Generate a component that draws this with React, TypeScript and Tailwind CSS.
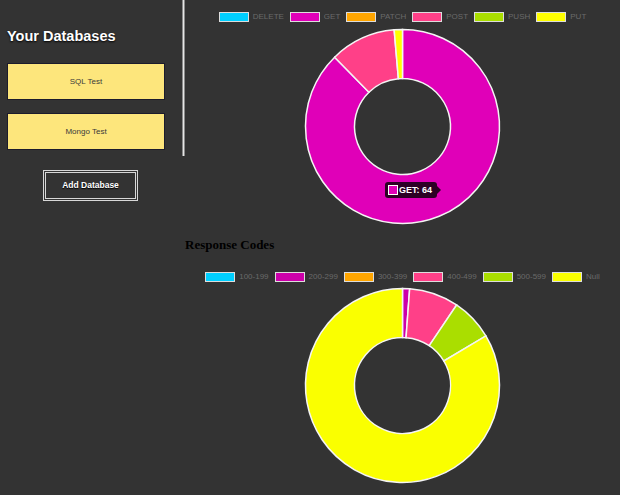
type Slice = { label: string; value: number; color: string }

const methods: Slice[] = [
  { label: "DELETE", value: 0, color: "#00cfff" },
  { label: "GET", value: 64, color: "#e000b8" },
  { label: "PATCH", value: 0, color: "#ffa500" },
  { label: "POST", value: 8, color: "#ff4088" },
  { label: "PUSH", value: 0, color: "#aade00" },
  { label: "PUT", value: 1, color: "#ffff00" },
]

const codes: Slice[] = [
  { label: "100-199", value: 0, color: "#00cfff" },
  { label: "200-299", value: 1, color: "#cc00aa" },
  { label: "300-399", value: 0, color: "#ffa500" },
  { label: "400-499", value: 7, color: "#ff4088" },
  { label: "500-599", value: 6, color: "#aade00" },
  { label: "Null", value: 71, color: "#faff00" },
]

function pt(cx: number, cy: number, r: number, a: number) {
  return [cx + r * Math.sin(a), cy - r * Math.cos(a)]
}

function arc(cx: number, cy: number, ro: number, ri: number, a0: number, a1: number) {
  const big = a1 - a0 > Math.PI ? 1 : 0
  const [x0, y0] = pt(cx, cy, ro, a0)
  const [x1, y1] = pt(cx, cy, ro, a1)
  const [x2, y2] = pt(cx, cy, ri, a1)
  const [x3, y3] = pt(cx, cy, ri, a0)
  return `M${x0} ${y0} A${ro} ${ro} 0 ${big} 1 ${x1} ${y1} L${x2} ${y2} A${ri} ${ri} 0 ${big} 0 ${x3} ${y3} Z`
}

function Donut({ data }: { data: Slice[] }) {
  const total = data.reduce((s, d) => s + d.value, 0)
  let a = 0
  return (
    <svg width="435" height="200" className="block">
      {data.map((d) => {
        if (!d.value) return null
        const a0 = a
        a += (d.value / total) * Math.PI * 2
        return (
          <path key={d.label} d={arc(217.5, 99.5, 97, 48, a0, a)} fill={d.color} stroke="#f4f4f4" strokeWidth="1.5" />
        )
      })}
    </svg>
  )
}

function Legend({ data }: { data: Slice[] }) {
  return (
    <div className="flex h-[10px] items-center justify-center gap-[6px]">
      {data.map((d) => (
        <div key={d.label} className="flex items-center gap-[4px]">
          <span className="h-[10px] w-[30px] border border-[#dddddd]" style={{ backgroundColor: d.color }} />
          <span className="text-[8px] leading-none text-[#6a6a6a]">{d.label}</span>
        </div>
      ))}
    </div>
  )
}

export default function App() {
  return (
    <div
      className="flex h-[495px] w-[620px] overflow-hidden bg-[#333333]"
      style={{ fontFamily: '"Liberation Sans", Arial, sans-serif' }}
    >
      <aside className="w-[185px] shrink-0">
        <div className="flex">
          <div className="w-[182px] pl-[7px] pr-[17px]">
            <h2 className="pt-[28px] text-[14.5px] font-bold leading-[16px] text-white [text-shadow:0_1px_2px_#000]">
              Your Databases
            </h2>
            <div className="mt-[19px] flex flex-col gap-[13px] pb-[6px]">
              {["SQL Test", "Mongo Test"].map((name) => (
                <button
                  key={name}
                  className="flex h-[37px] w-[158px] items-center justify-center border border-[#1c1c2c] bg-[#fde67c] text-[8px] text-[#3a3a3a]"
                >
                  {name}
                </button>
              ))}
            </div>
          </div>
          <div className="w-[3px] border-x border-[#8a8a8a] bg-[#e6e6e6]" />
        </div>
        <div className="mt-[14px] flex pl-[43px]">
          <button className="h-[31px] w-[95px] border-[3px] border-double border-[#d8d8d8] text-[8.5px] font-bold text-white [text-shadow:0_1px_1px_#000]">
            Add Database
          </button>
        </div>
      </aside>

      <main className="w-[435px]">
        <div className="mt-[12px]">
          <Legend data={methods} />
        </div>
        <div className="relative mt-[5px]">
          <Donut data={methods} />
          <div className="absolute left-[200px] top-[155px] flex h-[16px] items-center gap-[1px] rounded-[3px] bg-black/80 pl-[3px] pr-[5px]">
            <span className="h-[10px] w-[10px] border border-white bg-[#e000b8]" />
            <span className="text-[9px] font-bold leading-none text-white">GET: 64</span>
            <span className="absolute right-[-4px] top-[4px] h-0 w-0 border-y-[4px] border-l-[4px] border-y-transparent border-l-black/80" />
          </div>
        </div>
        <h3
          className="mt-[10px] text-[13px] font-bold leading-[15px] text-black"
          style={{ fontFamily: '"Liberation Serif", "Times New Roman", serif' }}
        >
          Response Codes
        </h3>
        <div className="mt-[20px]">
          <Legend data={codes} />
        </div>
        <div className="mt-[4px]">
          <Donut data={codes} />
        </div>
      </main>
    </div>
  )
}
